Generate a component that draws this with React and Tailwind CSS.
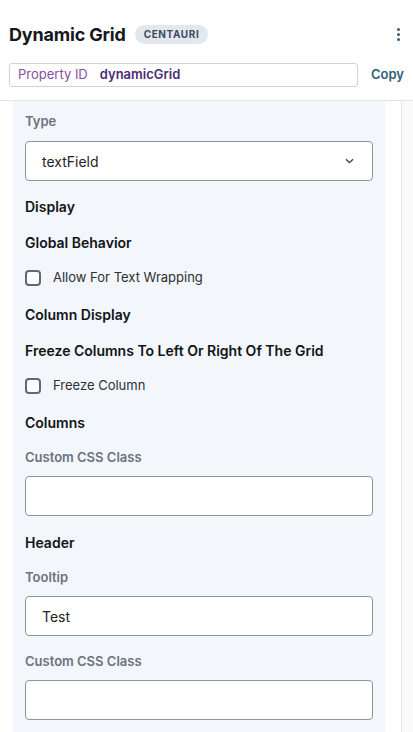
const font = { fontFamily: 'Inter, "Noto Sans", sans-serif' };

const Heading = ({ children, className = '' }) => (
  <div className={`h-9 flex items-center text-[14px] font-semibold text-[#111418] ${className}`}>{children}</div>
);

const Label = ({ children, className = '' }) => (
  <div className={`h-9 flex items-center text-[13px] font-semibold text-[#6b7280] ${className}`}>{children}</div>
);

const Checkbox = ({ label }) => (
  <label className="h-9 flex items-center gap-3">
    <span className="w-4 h-4 rounded-[4px] border-2 border-[#5f6875] bg-white" />
    <span className="text-[13px] text-[#2b2f36]">{label}</span>
  </label>
);

const TextInput = ({ value = '' }) => (
  <div className="h-10 rounded-[4px] border border-[#8e949c] bg-white flex items-center px-4 text-[14px] text-[#1f2328]">
    {value}
  </div>
);

export default function App() {
  return (
    <div className="w-[413px] h-[732px] overflow-hidden bg-white flex flex-col" style={font}>
      {/* header */}
      <div className="h-[101px] shrink-0 border-b border-[#dfe4ea] px-[9px]">
        <div className="flex items-center h-[34px] mt-[17px]">
          <h1 className="text-[18px] font-bold text-[#15181d] tracking-[-0.01em]">Dynamic Grid</h1>
          <span className="ml-[9px] h-[19px] px-[9px] rounded-full bg-[#e3e8f0] text-[#3d4a60] text-[10px] font-bold tracking-[0.06em] flex items-center">
            CENTAURI
          </span>
          <div className="ml-auto mr-[4px] flex flex-col gap-[2px]">
            <span className="w-[3px] h-[3px] rounded-full bg-[#3e5b70]" />
            <span className="w-[3px] h-[3px] rounded-full bg-[#3e5b70]" />
            <span className="w-[3px] h-[3px] rounded-full bg-[#3e5b70]" />
          </div>
        </div>
        <div className="flex items-center mt-[12px]">
          <div className="w-[349px] h-[24px] rounded-[3px] border border-[#d8cbe2] flex items-center px-[8px] text-[13px]">
            <span className="text-[#8550a6]">Property ID</span>
            <span className="ml-[12px] font-semibold text-[#4c2a72]">dynamicGrid</span>
          </div>
          <span className="ml-auto text-[13px] font-semibold text-[#2f5e74]">Copy</span>
        </div>
      </div>

      {/* body */}
      <div className="flex flex-1 min-h-0">
        <div className="ml-[13px] w-[372px] bg-[#f3f6fa] px-3 pt-[3px]">
          <Label>Type</Label>
          <div className="mt-px h-10 rounded-[4px] border border-[#8e949c] bg-white flex items-center pl-4 pr-[18px] text-[14px] text-[#1f2328]">
            <span>textField</span>
            <svg className="ml-auto" width="9" height="6" viewBox="0 0 9 6" fill="none">
              <path d="M1 1.2 4.5 4.6 8 1.2" stroke="#3a3f47" strokeWidth="1.3" />
            </svg>
          </div>
          <Heading className="mt-[7px]">Display</Heading>
          <Heading>Global Behavior</Heading>
          <Checkbox label="Allow For Text Wrapping" />
          <Heading>Column Display</Heading>
          <Heading>Freeze Columns To Left Or Right Of The Grid</Heading>
          <Checkbox label="Freeze Column" />
          <Heading>Columns</Heading>
          <Label>Custom CSS Class</Label>
          <TextInput />
          <Heading className="mt-2">Header</Heading>
          <Label>Tooltip</Label>
          <TextInput value="Test" />
          <Label className="mt-2">Custom CSS Class</Label>
          <TextInput />
        </div>
        <div className="ml-auto w-[12px] border-l border-[#e4e6e9] bg-[#fafafa]" />
      </div>
    </div>
  );
}
